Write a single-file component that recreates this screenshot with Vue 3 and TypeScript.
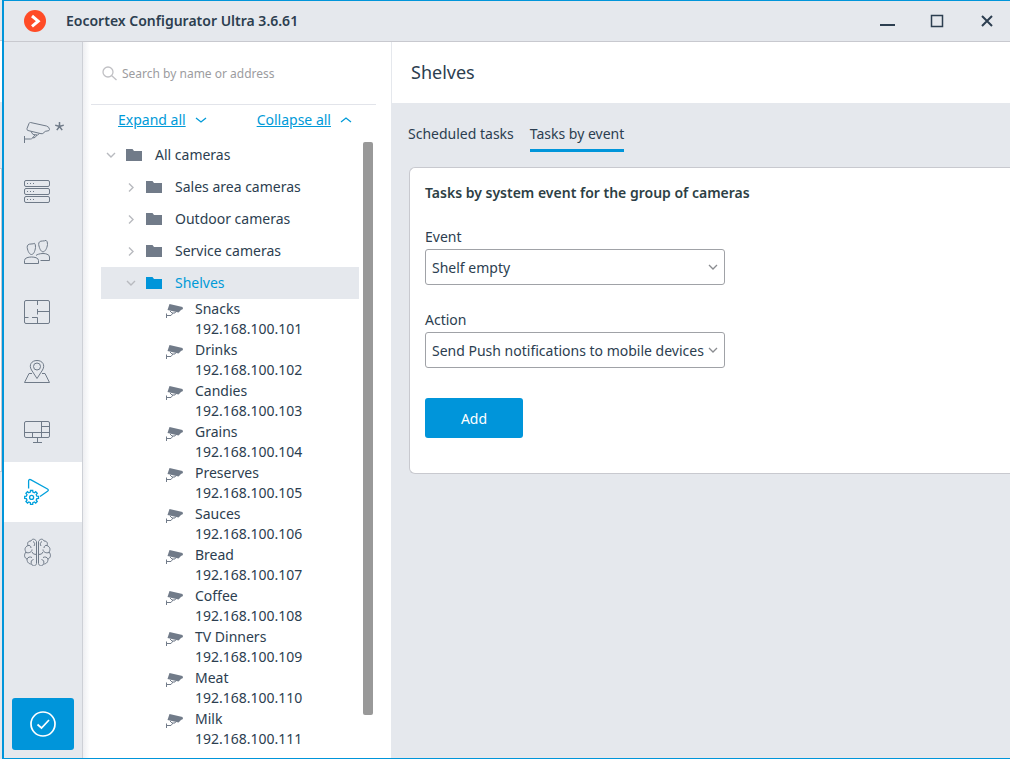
<script setup lang="ts">
import { ref } from 'vue'

interface Camera {
  name: string
  address: string
}

const cameras: Camera[] = [
  'Snacks', 'Drinks', 'Candies', 'Grains', 'Preserves', 'Sauces',
  'Bread', 'Coffee', 'TV Dinners', 'Meat', 'Milk',
].map((name, i) => ({ name, address: `192.168.100.${101 + i}` }))

const groups = ['Sales area cameras', 'Outdoor cameras', 'Service cameras']

const search = ref('')
const event = ref('Shelf empty')
const action = ref('Send Push notifications to mobile devices')

// Outline of a cog wheel: each tooth is two outer and two inner points.
function gear(cx: number, cy: number, inner: number, outer: number, teeth: number): string {
  const points: string[] = []
  for (let i = 0; i < teeth; i++) {
    for (const [shift, radius] of [[-0.3, inner], [-0.2, outer], [0.2, outer], [0.3, inner]]) {
      const angle = ((i + shift) / teeth) * Math.PI * 2
      points.push(`${(cx + radius * Math.cos(angle)).toFixed(2)} ${(cy + radius * Math.sin(angle)).toFixed(2)}`)
    }
  }
  return `M${points.join('L')}z`
}
const cog = gear(7.6, 19.4, 5.4, 7, 8)
</script>

<template>
  <div class="desktop">
    <div class="behind" aria-hidden="true">
      <div class="behind-title"></div>
      <div class="behind-header"></div>
      <div class="behind-card"></div>
    </div>
    <div class="window">
      <header class="titlebar">
        <svg class="logo" viewBox="0 0 22 22" aria-hidden="true">
          <circle cx="11" cy="11" r="11" fill="#ff4b26" />
          <path d="M8 6l6.200 5.200L8 16.400" fill="none" stroke="#fff" stroke-width="3" />
        </svg>
        <h1>Eocortex Configurator Ultra 3.6.61</h1>
        <div class="controls">
          <button type="button" aria-label="Minimize">
            <svg viewBox="0 0 16 16"><path d="M1 11h15v2H1z" fill="#2c3e50" /></svg>
          </button>
          <button type="button" aria-label="Maximize">
            <svg viewBox="0 0 16 16"><path d="M2.500 2.500h11v11h-11z" fill="none" stroke="#2c3e50" stroke-width="1.500" /></svg>
          </button>
          <button type="button" aria-label="Close">
            <svg viewBox="0 0 16 16"><path d="M3 3l10 10M13 3 3 13" fill="none" stroke="#2c3e50" stroke-width="2" /></svg>
          </button>
        </div>
      </header>

      <div class="body">
        <nav class="sidebar" aria-label="Sections">
          <button type="button" class="section" aria-label="Cameras">
            <svg class="wide" viewBox="0 0 40 28">
              <path d="M6.500 4.500 22.500 8q3 1 3 3.500 0 1.500-2.500 1.500-2 0-3 1.500t-3 1.200L4 12.500q-1.500-.5-1-2l2-5q.5-1.200 1.500-1zM7 13.500l2 3 4.500.5 2-1.500M11 17 8.500 20q-.8 1-2 1H.5M.5 18v7M8.500 20l2.500-.5 2-2.500" />
              <path class="star" d="M35.500 8.500V4M35.500 8.500l4.300-1.400M35.500 8.500l2.700 3.600M35.500 8.500l-2.700 3.600M35.500 8.500l-4.300-1.400" />
            </svg>
          </button>
          <button type="button" class="section" aria-label="Servers">
            <svg viewBox="0 0 26 28">
              <rect x=".5" y="2.500" width="25" height="6" rx="1.500" />
              <rect x=".5" y="10.500" width="25" height="6" rx="1.500" />
              <rect x=".5" y="18.500" width="25" height="6" rx="1.500" />
              <path d="M3 5.500h1M6 5.500h1M9 5.500h1M3 13.500h1M6 13.500h1M9 13.500h1M3 21.500h1M6 21.500h1M9 21.500h1" />
            </svg>
          </button>
          <button type="button" class="section" aria-label="Users">
            <svg viewBox="0 0 26 28">
              <path d="M3.200 9.500C3 7 4.500 6 7 6q2.500 0 3.500-.7 1.200 1 1 4.200C11 13.500 9.500 16.500 7.500 16.500S3.800 13.500 3.200 9.500zM.5 25.500v-3q0-2 2.500-2.800 2-.7 4.500-.7t4.500.7q2.500.8 2.500 2.800v3z" />
              <path d="M14.700 6.500C14.500 4 16 3 18.500 3q2.500 0 3.500-.7 1.700 1 1.500 4.200C23 10.500 21 13.800 19 13.800s-3.700-3.300-4.300-7.300zM12 17.500q1-1 2.500-1.300 2-.7 4.500-.7t4 .7q2.500.8 2.500 2.800v3.500h-9" />
            </svg>
          </button>
          <button type="button" class="section" aria-label="Plans">
            <svg viewBox="0 0 26 28">
              <rect x=".5" y="2.500" width="25" height="23" rx="1.500" />
              <path d="M13.500 2.500V7M13.500 11v5.500M13.500 13.500h12M.5 19.500h4M8 19.500h5.500v6" />
            </svg>
          </button>
          <button type="button" class="section" aria-label="Maps">
            <svg viewBox="0 0 26 28">
              <path d="M13 20.500 7.500 12C4.500 7 7.500 2.500 13 2.500s8.500 4.500 5.500 9.500zM8 15.500H5L.5 24.500h25l-4.500-9h-3" />
              <circle cx="13" cy="8.500" r="3.500" />
            </svg>
          </button>
          <button type="button" class="section" aria-label="Screens">
            <svg viewBox="0 0 26 28">
              <rect x=".5" y="3.500" width="25" height="16" rx="1.500" />
              <path d="M.5 14.500h25M17.500 3.500v16M17.500 8.500h8M8.500 14.500v5M13.500 19.500v5M9 24.500h9" />
            </svg>
          </button>
          <button type="button" class="section active" aria-label="Automation">
            <svg viewBox="0 0 26 28">
              <path d="M4.600 10.500V3q0-2 2-1.300L23.500 11q1.600 1.200 0 2.200L16 18.500" />
              <path :d="cog" />
              <circle cx="7.600" cy="19.400" r="2" />
            </svg>
          </button>
          <button type="button" class="section" aria-label="Analytics">
            <svg class="brain" viewBox="0 0 27 28">
              <path d="M12.500 3.500C11 .5 8 .5 7 3 4 3 3 5 4 7.500.5 9 .5 12 2 14-.5 17 .5 20 3 21c0 4 2.500 5 4.500 5 1.500 3 4.500 2 5-.5zM9 3.500c2 1 2 3 1 4.500M4 7.500C5.500 7 7 8 7 10M2 14.500c3 1 6-.5 6-3M8 14l1.500 2 3 .5M3 21c1-2 3-2.500 5-1.500M7.500 25.500c-1-2 0-3.500 2-4" />
              <path d="M14.500 3.500c1.500-3 4.500-3 5.500-.5 3 0 4 2 3 4.500 3.500 1.500 3.500 4.500 2 6.500 2.500 3 1.500 6-1 7 0 4-2.500 5-4.500 5-1.500 3-4.500 2-5-.5zM18 3.500c-2 1-2 3-1 4.500M23 7.500c-1.500-.5-3 .5-3 2.500M25 14.500c-3 1-6-.5-6-3M19 14l-1.500 2-3 .5M24 21c-1-2-3-2.500-5-1.500M19.500 25.500c1-2 0-3.500-2-4" />
            </svg>
          </button>
          <button type="button" class="apply" aria-label="Apply">
            <svg viewBox="0 0 26 26">
              <circle cx="13" cy="13" r="12" />
              <path d="M7.500 13.500l4 3.500 7.500-8" />
            </svg>
          </button>
        </nav>

        <aside class="panel">
          <div class="search">
            <svg viewBox="0 0 16 16" aria-hidden="true">
              <circle cx="6" cy="6" r="5" />
              <path d="M9.500 9.500l5 4.500" />
            </svg>
            <input v-model="search" type="text" placeholder="Search by name or address" aria-label="Search by name or address" />
          </div>
          <div class="bulk">
            <a href="#">Expand all</a>
            <svg viewBox="0 0 12 8" aria-hidden="true"><path d="M1 2l5 4 5-4" /></svg>
            <a href="#" class="collapse">Collapse all</a>
            <svg viewBox="0 0 12 8" aria-hidden="true"><path d="M1 6l5-4 5 4" /></svg>
          </div>
          <div class="scroller">
            <ul class="tree">
              <li class="row root">
                <svg class="chevron" viewBox="0 0 10 10"><path d="M1 3l4 4 4-4" /></svg>
                <svg class="folder" viewBox="0 0 16 12"><path d="M0 0h6.500l1.500 2h8v10H0z" /></svg>
                <span>All cameras</span>
              </li>
              <li v-for="g in groups" :key="g" class="row">
                <svg class="chevron" viewBox="0 0 10 10"><path d="M3 1.500l4 4-4 4" /></svg>
                <svg class="folder" viewBox="0 0 16 12"><path d="M0 0h6.500l1.500 2h8v10H0z" /></svg>
                <span>{{ g }}</span>
              </li>
              <li class="row selected">
                <svg class="chevron" viewBox="0 0 10 10"><path d="M1 3l4 4 4-4" /></svg>
                <svg class="folder" viewBox="0 0 16 12"><path d="M0 0h6.500l1.500 2h8v10H0z" /></svg>
                <span>Shelves</span>
              </li>
              <li v-for="c in cameras" :key="c.name" class="camera">
                <svg viewBox="0 0 18 14">
                  <path d="M3.500 0 16.500 3 17 5 15 6 12.500 8.500 1.500 6z" fill="#717b89" />
                  <path d="M4 7l2 2h3l.5-1M7 9 5 11.500H.5M.5 9.500V14" fill="none" stroke="#717b89" />
                </svg>
                <div>{{ c.name }}<br />{{ c.address }}</div>
              </li>
            </ul>
            <div class="track"><div class="thumb"></div></div>
          </div>
        </aside>

        <main class="content">
          <h2>Shelves</h2>
          <div class="tabs" role="tablist">
            <button type="button" role="tab" aria-selected="false">Scheduled tasks</button>
            <button type="button" role="tab" aria-selected="true" class="current">Tasks by event</button>
          </div>
          <section class="card">
            <h3>Tasks by system event for the group of cameras</h3>
            <label for="event">Event</label>
            <div class="select">
              <select id="event" v-model="event"><option>Shelf empty</option></select>
              <svg viewBox="0 0 10 10" aria-hidden="true"><path d="M1 3l4 4 4-4" /></svg>
            </div>
            <label for="action">Action</label>
            <div class="select">
              <select id="action" v-model="action"><option>Send Push notifications to mobile devices</option></select>
              <svg viewBox="0 0 10 10" aria-hidden="true"><path d="M1 3l4 4 4-4" /></svg>
            </div>
            <button type="button" class="add">Add</button>
          </section>
        </main>
      </div>
    </div>
  </div>
</template>

<style>
body {
  margin: 0;
}
</style>

<style scoped>
* {
  box-sizing: border-box;
}
.desktop {
  display: flex;
  height: 100vh;
}
.behind {
  flex: none;
  width: 2px;
  background: #e5e8ed;
}
.behind-title {
  height: 41px;
  border-bottom: 1px solid #c8c9cf;
}
.behind-header {
  height: 61px;
  background: #fff;
}
.behind-card {
  height: 304px;
  margin-top: 66px;
  border: solid #c8c9cf;
  border-width: 1px 1px 1px 0;
  background: #fff;
}
.window {
  display: flex;
  flex: 1;
  flex-direction: column;
  min-width: 0;
  border: solid #0095da;
  border-width: 1px 0 1px 2px;
  background: #e5e8ed;
  color: #2c3e50;
  font: 14px/20px "Noto Sans", "Open Sans", sans-serif;
  overflow: hidden;
}
button {
  padding: 0;
  border: 0;
  background: none;
  color: inherit;
  font: inherit;
}
svg {
  display: block;
  flex: none;
}
h1, h2, h3 {
  margin: 0;
}
.titlebar {
  display: flex;
  align-items: center;
  flex: none;
  height: 41px;
  padding: 0 15px 0 20px;
  border-bottom: 1px solid #c8c9cf;
}
.logo {
  width: 22px;
  height: 22px;
  margin-right: 20px;
}
h1 {
  font-size: 14px;
  font-weight: 600;
}
.controls {
  display: flex;
  gap: 34px;
  margin-left: auto;
}
.controls svg {
  width: 16px;
  height: 16px;
}
.body {
  display: flex;
  flex: 1;
  min-height: 0;
}
.sidebar {
  display: flex;
  flex-direction: column;
  flex: none;
  width: 79px;
  padding-top: 60px;
  border-right: 1px solid #cdd0d6;
}
.section {
  display: flex;
  align-items: center;
  height: 60px;
  padding-left: 20px;
}
.section svg {
  width: 26px;
  height: 28px;
  fill: none;
  stroke: #6f7a88;
  stroke-width: 1;
}
.section svg.wide {
  width: 40px;
}
.section svg.brain {
  width: 27px;
}
.star {
  stroke-width: 1.5;
}
.section.active {
  background: #fff;
}
.section.active svg {
  stroke: #00a0dc;
  stroke-width: 1.3;
}
.apply {
  display: flex;
  align-items: center;
  justify-content: center;
  height: 52px;
  margin: auto 8px 8px;
  border-radius: 3px;
  background: #0095da;
}
.apply svg {
  width: 26px;
  height: 26px;
  fill: none;
  stroke: #fff;
  stroke-width: 1.7;
}
.panel {
  display: flex;
  flex-direction: column;
  flex: none;
  width: 308px;
  padding: 0 15px 0 8px;
  background: linear-gradient(to right, #eeeff2, #fff 7px);
}
.search {
  display: flex;
  align-items: center;
  gap: 4px;
  flex: none;
  height: 63px;
  padding: 2px 0 0 11px;
  border-bottom: 1px solid #e2e4ea;
}
.search svg {
  width: 16px;
  height: 16px;
  fill: none;
  stroke: #c0c0c4;
  stroke-width: 1.3;
}
.search input {
  flex: 1;
  min-width: 0;
  padding: 0;
  border: 0;
  outline: 0;
  background: none;
  color: #2c3e50;
  font: 12px/20px "Noto Sans", "Open Sans", sans-serif;
}
.search input::placeholder {
  color: #9c9ca0;
  opacity: 1;
}
.bulk {
  display: flex;
  align-items: center;
  gap: 9px;
  flex: none;
  height: 30px;
  padding-left: 27px;
}
.bulk a {
  color: #009ad8;
}
.bulk .collapse {
  margin-left: 41px;
}
.bulk svg {
  width: 12px;
  height: 8px;
  fill: none;
  stroke: #009ad8;
  stroke-width: 1.3;
}
.scroller {
  display: flex;
  flex: 1;
  gap: 4px;
  min-height: 0;
  padding: 4px 3px 0 10px;
}
.tree {
  flex: 1;
  margin: 0;
  padding: 0;
  list-style: none;
  overflow: hidden;
}
.row {
  display: flex;
  align-items: center;
  height: 32px;
  padding-left: 25px;
}
.row.root {
  padding-left: 5px;
}
.row.selected {
  background: #e5e8ed;
  color: #009ad8;
}
.chevron {
  width: 10px;
  height: 10px;
  margin-right: 10px;
  fill: none;
  stroke: #b8babf;
  stroke-width: 1.4;
}
.folder {
  width: 16px;
  height: 12px;
  margin-right: 13px;
  fill: #717b89;
}
.selected .folder {
  fill: #0095da;
}
.camera {
  display: flex;
  gap: 11px;
  height: 41px;
  padding-left: 65px;
}
.camera svg {
  width: 18px;
  height: 14px;
  margin-top: 5px;
}
.track {
  flex: none;
  width: 10px;
  padding-top: 3px;
}
.thumb {
  height: 93%;
  border-radius: 2px;
  background: #999;
}
.content {
  flex: 1;
  min-width: 0;
}
h2 {
  height: 61px;
  padding-left: 19px;
  border-left: 1px solid #e5e8ed;
  background: #fff;
  font-size: 18px;
  font-weight: 400;
  line-height: 61px;
}
.tabs {
  display: flex;
  gap: 16px;
  padding: 20px 17px 0;
}
.tabs button {
  height: 29px;
  padding-bottom: 4px;
  border-bottom: 3px solid transparent;
}
.tabs .current {
  border-bottom-color: #0095da;
}
.card {
  margin: 15px 0 0 18px;
  padding: 15px 15px 35px;
  border: solid #c8c9cf;
  border-width: 1px 0 1px 1px;
  border-radius: 6px 0 0 6px;
  background: #fff;
}
h3 {
  margin-bottom: 24px;
  color: #2d3f45;
  font-size: 14px;
  font-weight: 600;
}
label {
  display: block;
  margin-bottom: 2px;
}
.select {
  position: relative;
  width: 300px;
  margin-bottom: 25px;
}
.select select {
  display: block;
  width: 100%;
  height: 36px;
  padding: 2px 20px 0 6px;
  border: 1px solid #a0a2a7;
  border-radius: 3px;
  appearance: none;
  background: #fff;
  color: #2c3e50;
  font: inherit;
}
.select svg {
  position: absolute;
  top: 13px;
  right: 7px;
  width: 10px;
  height: 10px;
  fill: none;
  stroke: #8a8c90;
  stroke-width: 1.3;
  pointer-events: none;
}
.add {
  display: block;
  width: 98px;
  height: 40px;
  margin-top: 30px;
  padding-top: 2px;
  border-radius: 3px;
  background: #0095da;
  color: #fff;
}
</style>
